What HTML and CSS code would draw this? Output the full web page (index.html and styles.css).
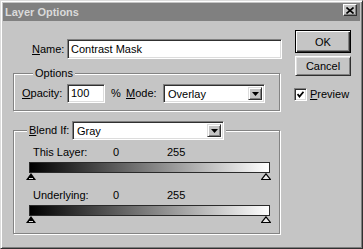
FILE: index.html
```html
<!doctype html>
<html lang="en">
  <head>
    <meta charset="UTF-8" />
    <meta name="viewport" content="width=device-width, initial-scale=1.0" />
    <title>Layer Options</title>
    <link rel="stylesheet" href="styles.css">
  </head>
  <body>
    <div class="window">
      <div class="titlebar">
        <span class="title">Layer Options</span>
        <span class="close-btn">
          <svg width="8" height="7" viewBox="0 0 8 7">
            <path d="M0.5 0.5 L7.5 6.5 M7.5 0.5 L0.5 6.5" stroke="#000" stroke-width="1.6" fill="none" />
          </svg>
        </span>
      </div>

      <div class="dialog-body">
        <div class="main">
          <div class="name-row">
            <label class="lbl name-lbl"><u>N</u>ame:</label>
            <div class="field name-field">Contrast Mask</div>
          </div>

          <fieldset class="group options">
            <legend>Options</legend>
            <div class="opt-row">
              <label class="lbl opacity-lbl"><u>O</u>pacity:</label>
              <div class="field opacity-field">100</div>
              <span class="pct">%</span>
              <label class="lbl mode-lbl"><u>M</u>ode:</label>
              <div class="select mode-select">
                <span class="select-val">Overlay</span>
                <span class="drop-btn">
                  <svg width="7" height="4" viewBox="0 0 7 4"><polygon points="0,0 7,0 3.5,4" fill="#000" /></svg>
                </span>
              </div>
            </div>
          </fieldset>

          <fieldset class="group blend">
            <legend>
              <label class="lbl blend-lbl"><u>B</u>lend If:</label>
              <div class="select blend-select">
                <span class="select-val">Gray</span>
                <span class="drop-btn">
                  <svg width="7" height="4" viewBox="0 0 7 4"><polygon points="0,0 7,0 3.5,4" fill="#000" /></svg>
                </span>
              </div>
            </legend>

            <div class="slider">
              <div class="slider-head">
                <span>This Layer:</span>
                <span>0</span>
                <span>255</span>
              </div>
              <div class="ramp"></div>
              <div class="handles">
                <svg width="10" height="7" viewBox="0 0 10 7"><polygon points="5,0 10,7 0,7" fill="#000" /><line x1="3" y1="5.5" x2="7" y2="5.5" stroke="#ddd" stroke-width="1" /></svg>
                <svg width="10" height="7" viewBox="0 0 10 7"><polygon points="5,0.8 9.4,6.5 0.6,6.5" fill="#e8e8e8" stroke="#000" stroke-width="1.2" /></svg>
              </div>
            </div>

            <div class="slider">
              <div class="slider-head">
                <span>Underlying:</span>
                <span>0</span>
                <span>255</span>
              </div>
              <div class="ramp"></div>
              <div class="handles">
                <svg width="10" height="7" viewBox="0 0 10 7"><polygon points="5,0 10,7 0,7" fill="#000" /><line x1="3" y1="5.5" x2="7" y2="5.5" stroke="#ddd" stroke-width="1" /></svg>
                <svg width="10" height="7" viewBox="0 0 10 7"><polygon points="5,0.8 9.4,6.5 0.6,6.5" fill="#e8e8e8" stroke="#000" stroke-width="1.2" /></svg>
              </div>
            </div>
          </fieldset>
        </div>

        <div class="side">
          <button class="btn default">OK</button>
          <button class="btn">Cancel</button>
          <label class="check">
            <span class="check-box">
              <svg width="7" height="7" viewBox="0 0 7 7"><polyline points="0.5,3 2.5,5.5 6.5,0.8" stroke="#000" stroke-width="1.8" fill="none" /></svg>
            </span>
            <span><u>P</u>review</span>
          </label>
        </div>
      </div>
    </div>
  </body>
</html>
```

FILE: styles.css
```css
* {
  margin: 0;
  padding: 0;
  box-sizing: border-box;
}

body {
  font-family: "Liberation Sans", Arial, sans-serif;
  font-size: 11px;
  line-height: 13px;
  color: #000;
  background: #c5c5c5;
}

u {
  text-decoration: underline;
  text-underline-offset: 1px;
}

.window {
  width: 363px;
  height: 249px;
  padding: 2px;
  background: #c5c5c5;
  border: 1px solid;
  border-color: #dcdcdc #303030 #303030 #dcdcdc;
  box-shadow: inset 1px 1px 0 #fff, inset -1px -1px 0 #7e7e7e;
}

.titlebar {
  height: 18px;
  display: flex;
  justify-content: space-between;
  align-items: flex-start;
  padding: 0 3px 0 2px;
  background: #808080;
}

.title {
  color: #dadada;
  font-weight: bold;
  line-height: 18px;
}

.close-btn {
  width: 14px;
  height: 12px;
  margin-top: 1px;
  display: flex;
  align-items: center;
  justify-content: center;
  background: #c5c5c5;
  border: 1px solid;
  border-color: #fff #303030 #303030 #fff;
  box-shadow: inset -1px -1px 0 #808080;
}

.dialog-body {
  display: flex;
  padding: 9px 0 0 10px;
}

.main {
  width: 269px;
}

.name-row {
  display: flex;
  align-items: center;
  margin-top: 9px;
  padding-left: 19px;
}

.name-lbl {
  width: 35px;
}

.field {
  background: #fff;
  border: 1px solid;
  border-color: #808080 #fff #fff #808080;
  box-shadow: inset 1px 1px 0 #303030, inset -1px -1px 0 #dcdcdc;
  padding: 0 3px;
  white-space: nowrap;
}

.name-field {
  width: 215px;
  height: 20px;
  line-height: 18px;
}

.group {
  width: 267px;
  border: 1px solid #838383;
  box-shadow: 1px 1px 0 #fff, inset 1px 1px 0 #fff;
  padding: 0 8px;
}

.group legend {
  background: #c5c5c5;
  padding: 0 2px;
}

.options {
  margin-top: 8px;
  padding-top: 4px;
  padding-bottom: 7px;
}

.options legend {
  margin-left: 11px;
}

.opt-row {
  display: flex;
  align-items: center;
  height: 19px;
}

.opacity-lbl {
  width: 45px;
}

.opacity-field {
  width: 38px;
  height: 19px;
  line-height: 17px;
}

.pct {
  width: 15px;
  margin-left: 6px;
}

.mode-lbl {
  width: 37px;
}

.select {
  display: flex;
  align-items: stretch;
  height: 19px;
  background: #fff;
  border: 1px solid;
  border-color: #808080 #fff #fff #808080;
  box-shadow: inset 1px 1px 0 #303030, inset -1px -1px 0 #dcdcdc;
  padding: 2px;
}

.select-val {
  flex: 1;
  line-height: 15px;
  padding-left: 2px;
}

.drop-btn {
  width: 14px;
  display: flex;
  align-items: center;
  justify-content: center;
  background: #c5c5c5;
  border: 1px solid;
  border-color: #dcdcdc #303030 #303030 #dcdcdc;
  box-shadow: inset 1px 1px 0 #fff, inset -1px -1px 0 #808080;
}

.mode-select {
  width: 102px;
}

.blend {
  margin-top: 10px;
  padding-top: 6px;
  padding-bottom: 10px;
}

.blend legend {
  margin-left: 5px;
  display: flex;
  align-items: center;
}

.blend-lbl {
  width: 43px;
}

.blend-select {
  width: 152px;
}

.slider {
  padding-left: 7px;
}

.slider + .slider {
  margin-top: 9px;
}

.slider-head {
  display: grid;
  grid-template-columns: 80px 54px auto;
  padding-left: 4px;
  height: 13px;
}

.ramp {
  width: 241px;
  height: 11px;
  margin-top: 3px;
  border: 1px solid #2a2a2a;
  background: linear-gradient(to right, #000, #fff);
}

.handles {
  width: 245px;
  height: 7px;
  margin-left: -3px;
  display: flex;
  justify-content: space-between;
}

.handles svg {
  display: block;
}

.side {
  width: 56px;
  margin-left: 13px;
  display: flex;
  flex-direction: column;
}

.btn {
  font-family: inherit;
  font-size: 11px;
  color: #000;
  width: 56px;
  height: 20px;
  background: #c5c5c5;
  border: 1px solid;
  border-color: #fff #303030 #303030 #fff;
  box-shadow: inset 1px 1px 0 #e0e0e0, inset -1px -1px 0 #808080;
}

.btn.default {
  height: 23px;
  border-color: #000;
  box-shadow: inset 1px 1px 0 #fff, inset -1px -1px 0 #303030, inset -2px -2px 0 #808080;
}

.btn + .btn {
  margin-top: 3px;
}

.check {
  display: flex;
  align-items: center;
  gap: 3px;
  margin-top: 12px;
  margin-left: -1px;
}

.check-box {
  width: 13px;
  height: 13px;
  display: flex;
  align-items: center;
  justify-content: center;
  background: #fff;
  border: 1px solid;
  border-color: #808080 #fff #fff #808080;
  box-shadow: inset 1px 1px 0 #303030, inset -1px -1px 0 #dcdcdc;
}
```
